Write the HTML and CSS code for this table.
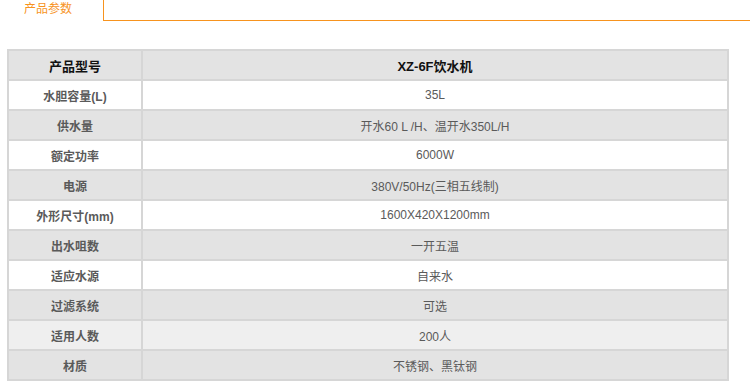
FILE: index.html
```html
<!DOCTYPE html>
<html lang="zh-CN">
<head>
<meta charset="utf-8">
<title>产品参数</title>
<link rel="stylesheet" href="styles.css">
</head>
<body>
<div class="tabs">
  <div class="tab-active">产品参数</div>
  <div class="tab-rest"></div>
</div>
<table class="spec">
  <tr class="head g"><td class="k">产品型号</td><td class="v">XZ-6F饮水机</td></tr>
  <tr class="w"><td class="k">水胆容量(L)</td><td class="v">35L</td></tr>
  <tr class="g"><td class="k">供水量</td><td class="v">开水60 L /H、温开水350L/H</td></tr>
  <tr class="w"><td class="k">额定功率</td><td class="v">6000W</td></tr>
  <tr class="g"><td class="k">电源</td><td class="v">380V/50Hz(三相五线制)</td></tr>
  <tr class="w"><td class="k">外形尺寸(mm)</td><td class="v">1600X420X1200mm</td></tr>
  <tr class="g"><td class="k">出水咀数</td><td class="v">一开五温</td></tr>
  <tr class="w"><td class="k">适应水源</td><td class="v">自来水</td></tr>
  <tr class="g"><td class="k">过滤系统</td><td class="v">可选</td></tr>
  <tr class="l"><td class="k">适用人数</td><td class="v">200人</td></tr>
  <tr class="g"><td class="k">材质</td><td class="v">不锈钢、黑钛钢</td></tr>
</table>
</body>
</html>
```
FILE: styles.css
```css
html, body {
  margin: 0;
  padding: 0;
  background: #fff;
  font-family: "Liberation Sans", "Noto Sans CJK SC", Arial, sans-serif;
}
.tabs {
  display: flex;
  height: 21px;
}
.tab-active {
  width: 103px;
  box-sizing: border-box;
  padding-left: 24px;
  padding-top: 1px;
  font-size: 12px;
  line-height: 16px;
  color: #f7931e;
}
.tab-rest {
  flex: 1;
  border-left: 1px solid #f7931e;
  border-bottom: 1px solid #f7931e;
}
.spec {
  margin: 28px 0 0 7px;
  width: 722px;
  border-collapse: collapse;
  border: 2px solid #d6d6d6;
}
.spec td {
  border: 2px solid #d6d6d6;
  height: 28px;
  padding: 0;
  text-align: center;
  font-size: 12px;
  color: #5a5a5a;
}
.spec td.k {
  width: 132px;
  font-weight: bold;
}
.spec tr.g { background: #e3e3e3; }
.spec tr.w { background: #fff; }
.spec tr.l { background: #efefef; }
.spec tr.head td {
  color: #111;
  font-size: 13px;
  font-weight: bold;
}
```
